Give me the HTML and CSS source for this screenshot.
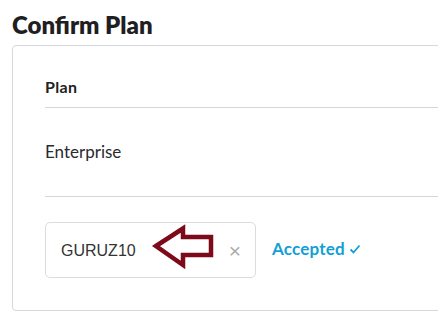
FILE: index.html
```html
<!DOCTYPE html>
<html lang="en">
<head>
    <meta charset="UTF-8">
    <meta name="viewport" content="width=device-width, initial-scale=1.0">
    <title>Confirm Plan</title>
    <link rel="stylesheet" href="styles.css">
</head>
<body>
    <div class="page">
        <h2 class="title">Confirm Plan</h2>
        <div class="card">
            <div class="plan-head">Plan</div>
            <div class="plan-row">Enterprise</div>

            <div class="coupon-row">
                <div class="coupon-box">
                    <span class="coupon-code">GURUZ10</span>
                    <span class="coupon-clear">&times;</span>
                </div>
                <span class="coupon-status">Accepted
                    <svg class="check" width="12" height="10" viewBox="0 0 12 10">
                        <path d="M1.5 5.5 L4.5 8.5 L10.5 1.5" fill="none" stroke="#119fd6" stroke-width="1.8"/>
                    </svg>
                </span>

                <!-- annotation arrow -->
                <svg class="arrow" width="70" height="50" viewBox="0 0 70 50">
                    <polygon points="8,24 35,6.5 35,15 63,15 63,33 35,33 35,43" fill="none" stroke="#7d0a1b" stroke-width="4.5" stroke-linejoin="miter"/>
                </svg>
            </div>
        </div>
    </div>
</body>
</html>
```

FILE: styles.css
```css
html, body {
    margin: 0;
    padding: 0;
    background: #fff;
    overflow: hidden;
}
.page {
    padding: 0 0 0 12px;
    font-family: Lato, "Open Sans", sans-serif;
    overflow: hidden;
    height: 311px;
}
.title {
    margin: 0;
    padding-top: 11px;
    height: 45px;
    box-sizing: border-box;
    font-size: 24px;
    line-height: 28px;
    font-weight: 800;
    color: #1f1f23;
}
.card {
    margin-right: -30px;
    border: 1px solid #d5d8de;
    border-radius: 4px;
    padding: 0 0 31px 32px;
    height: 266px;
    box-sizing: border-box;
}
.plan-head {
    padding: 31px 0 10px;
    line-height: 20px;
    font-size: 16px;
    letter-spacing: 0.3px;
    font-weight: 700;
    color: #222;
    border-bottom: 1px solid #d3d6dc;
}
.plan-row {
    padding: 34px 0 34px;
    line-height: 20px;
    font-size: 17px;
    color: #2a2a2e;
    border-bottom: 1px solid #d3d6dc;
}
.coupon-row {
    position: relative;
    display: flex;
    align-items: center;
    gap: 16px;
    margin-top: 25px;
}
.coupon-box {
    display: flex;
    align-items: center;
    justify-content: space-between;
    width: 211px;
    height: 56px;
    box-sizing: border-box;
    padding: 0 14px 0 15px;
    border: 1px solid #dcdcdc;
    border-radius: 5px;
}
.coupon-code {
    font-family: "Liberation Sans", Arial, sans-serif;
    font-size: 16px;
    color: #333;
    padding-top: 2px;
}
.coupon-clear {
    font-family: "Liberation Sans", Arial, sans-serif;
    font-size: 21px;
    color: #aaa;
    padding-top: 2px;
}
.coupon-status {
    display: flex;
    align-items: center;
    gap: 4px;
    padding-bottom: 3px;
    font-size: 17px;
    letter-spacing: 0.2px;
    font-weight: 700;
    color: #119fd6;
}
.arrow {
    position: absolute;
    left: 103px;
    top: 0;
}
```
